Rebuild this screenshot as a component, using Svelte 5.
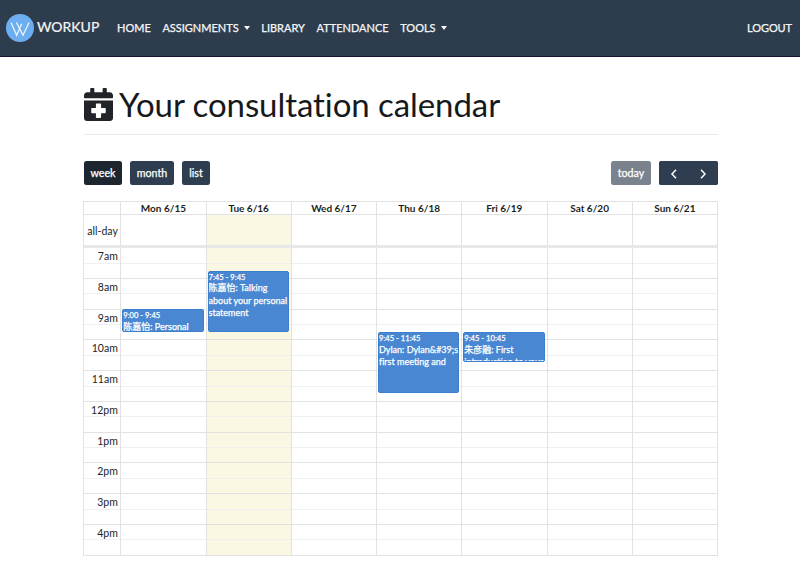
<script>
  const START = 7;
  const HOUR = 30.75;
  const hours = ['7am', '8am', '9am', '10am', '11am', '12pm', '1pm', '2pm', '3pm', '4pm'];
  const days = [
    { label: 'Mon 6/15', events: [{ from: 9, to: 9.75, time: '9:00 - 9:45', title: '陈嘉怡: Personal' }] },
    { label: 'Tue 6/16', today: true, events: [{ from: 7.75, to: 9.75, time: '7:45 - 9:45', title: '陈嘉怡: Talking about your personal statement' }] },
    { label: 'Wed 6/17', events: [] },
    { label: 'Thu 6/18', events: [{ from: 9.75, to: 11.75, time: '9:45 - 11:45', title: 'Dylan: Dylan&#39;s first meeting and' }] },
    { label: 'Fri 6/19', events: [{ from: 9.75, to: 10.75, time: '9:45 - 10:45', title: '朱彦融: First introduction to your' }] },
    { label: 'Sat 6/20', events: [] },
    { label: 'Sun 6/21', events: [] }
  ];
  const views = ['week', 'month', 'list'];
  let view = $state('week');
</script>

<header>
  <a class="brand" href="#home">
    <svg width="28" height="28" viewBox="0 0 28 28">
      <circle cx="14" cy="14" r="14" fill="#6caef0" />
      <path fill="none" stroke="#e9f4ff" stroke-width="1.3" d="M5 8.500 10.700 21.300 15.600 9.800 M10.500 8.500 17 21.300 23 8.500" />
    </svg>
    <span>WORKUP</span>
  </a>
  <nav>
    <a href="#home">HOME</a>
    <a href="#assignments">ASSIGNMENTS<i></i></a>
    <a href="#library">LIBRARY</a>
    <a href="#attendance">ATTENDANCE</a>
    <a href="#tools">TOOLS<i></i></a>
  </nav>
  <a class="logout" href="#logout">LOGOUT</a>
</header>

<main>
  <h1>
    <svg width="29" height="33" viewBox="0 0 448 512" preserveAspectRatio="none">
      <path fill="#212529" d="M0 464c0 26.500 21.500 48 48 48h352c26.500 0 48-21.500 48-48V192H0zM436 160H12c-6.600 0-12-5.400-12-12v-36c0-26.500 21.500-48 48-48h48V12c0-6.600 5.400-12 12-12h40c6.600 0 12 5.400 12 12v52h128V12c0-6.600 5.400-12 12-12h40c6.600 0 12 5.400 12 12v52h48c26.500 0 48 21.500 48 48v36c0 6.600-5.400 12-12 12z" />
      <path fill="#fff" d="M200 240h48c9 0 16 7 16 16v56h56c9 0 16 7 16 16v48c0 9-7 16-16 16h-56v56c0 9-7 16-16 16h-48c-9 0-16-7-16-16v-56h-56c-9 0-16-7-16-16v-48c0-9 7-16 16-16h56v-56c0-9 7-16 16-16z" />
    </svg>
    <span>Your consultation calendar</span>
  </h1>

  <div class="toolbar">
    {#each views as v}
      <button class={v} class:active={view === v} onclick={() => (view = v)}>{v}</button>
    {/each}
    <button class="today-btn" disabled>today</button>
    <div class="arrows">
      <button aria-label="previous"><svg width="8" height="10" viewBox="0 0 8 10"><path d="M6 .8 2 5l4 4.200" /></svg></button>
      <button aria-label="next"><svg width="8" height="10" viewBox="0 0 8 10"><path d="M2 .8l4 4.200-4 4.200" /></svg></button>
    </div>
  </div>

  <section class="calendar">
    <div class="row head">
      <div class="axis"></div>
      {#each days as d}<div class="cell">{d.label}</div>{/each}
    </div>
    <div class="row allday">
      <div class="axis">all-day</div>
      {#each days as d}<div class="cell" class:today={d.today}></div>{/each}
    </div>
    <div class="divider"></div>
    <div class="row body">
      <div class="axis">
        {#each hours as h}<div class="hour"><span>{h}</span></div>{/each}
      </div>
      {#each days as d}
        <div class="cell" class:today={d.today}>
          {#each hours as h}<div class="hour"></div>{/each}
          {#each d.events as e}
            <article style="top: {(e.from - START) * HOUR + 0.7}px; height: {(e.to - e.from) * HOUR - 0.7}px">
              <time>{e.time}</time>
              <p>{e.title}</p>
            </article>
          {/each}
        </div>
      {/each}
    </div>
  </section>
</main>

<style>
  :global(body) {
    background: #fff;
    overflow: hidden;
    font-family: Lato, 'Noto Sans CJK SC', sans-serif;
    font-variant-ligatures: none;
    color: #212529;
  }
  header {
    box-sizing: border-box;
    height: 57px;
    display: flex;
    align-items: center;
    padding: 0 8px 1px 6px;
    background: #2e3d4d;
    border-bottom: 1px solid #12152f;
  }
  a {
    color: #f4f5f6;
    text-decoration: none;
    font-size: 11px;
    line-height: 16px;
    white-space: nowrap;
  }
  .brand {
    display: flex;
    align-items: center;
    gap: 3px;
    width: 111px;
  }
  .brand span {
    font-size: 14px;
    padding-bottom: 2px;
    -webkit-text-stroke: 0.2px #f4f5f6;
  }
  nav {
    display: flex;
    gap: 11.600px;
    flex: 1;
  }
  nav a, .logout {
    padding-top: 1px;
    -webkit-text-stroke: 0.25px #f4f5f6;
  }
  .logout {
    letter-spacing: -0.1px;
  }
  i {
    display: inline-block;
    margin-left: 5px;
    vertical-align: 2px;
    border: 3.500px solid transparent;
    border-width: 4px 3.500px 0;
    border-top-color: #f4f5f6;
  }
  main {
    width: 634px;
    margin-left: 84px;
  }
  h1 {
    box-sizing: border-box;
    height: 78px;
    margin: 0;
    padding-top: 24px;
    display: flex;
    align-items: center;
    gap: 6px;
    border-bottom: 1px solid #e9e9e9;
    font-weight: 400;
    font-size: 33px;
    letter-spacing: -0.07px;
    line-height: 48px;
    color: #16191c;
    white-space: nowrap;
  }
  h1 svg {
    margin-bottom: 6px;
  }
  h1 span {
    padding-bottom: 7px;
  }
  .toolbar {
    display: flex;
    gap: 8px;
    padding: 26px 0 16px;
  }
  button {
    height: 24px;
    padding: 0;
    border: 0;
    border-radius: 2.500px;
    background: #2e3d4f;
    color: #fff;
    font: 400 10.700px/24px Lato, sans-serif;
    -webkit-text-stroke: 0.25px #fff;
  }
  .week { width: 38px; }
  .month { width: 44px; }
  .list { width: 28px; }
  .active {
    background: #1d252f;
  }
  .today-btn {
    width: 40px;
    margin-left: auto;
    background: #7a828d;
  }
  .arrows {
    display: flex;
    width: 59px;
    border-radius: 2.500px;
    background: #2e3d4f;
  }
  .arrows button {
    flex: 1;
    display: flex;
    align-items: center;
    justify-content: center;
    padding-top: 2px;
  }
  .arrows path {
    fill: none;
    stroke: #fff;
    stroke-width: 1.5;
  }
  .calendar {
    box-sizing: border-box;
    width: 635px;
    margin-left: -1px;
    border: 1px solid #e2e2e2;
  }
  .row {
    display: grid;
    grid-template-columns: 36.300px repeat(7, minmax(0, 1fr));
  }
  .cell {
    border-left: 1px solid #e2e2e2;
  }
  .today {
    background: #faf7e3;
  }
  .head {
    height: 12px;
    font-weight: 700;
    font-size: 10px;
    line-height: 13px;
    text-align: center;
    color: #1c1f22;
  }
  .allday {
    height: 30px;
    border-top: 1px solid #e2e2e2;
    font-size: 10.500px;
    line-height: 32px;
  }
  .axis {
    text-align: right;
    padding-right: 2.500px;
  }
  .divider {
    position: relative;
    z-index: 1;
    height: 3px;
    background: #e8e8e8;
  }
  .body {
    margin-top: -1px;
  }
  .body .cell {
    position: relative;
  }
  .hour {
    box-sizing: border-box;
    height: 30.75px;
    border-top: 1px solid #e2e2e2;
    font-size: 10.500px;
    line-height: 17px;
    background: linear-gradient(#f0f0f0, #f0f0f0) 0 14.500px / 100% 1px no-repeat;
  }
  .hour:first-child {
    border-top-color: transparent;
  }
  .axis .hour {
    margin-right: -2.500px;
    padding-right: 2.500px;
  }
  article {
    position: absolute;
    left: 1px;
    right: 2px;
    box-sizing: border-box;
    overflow: hidden;
    padding: 0;
    border: 1px solid #3b7fcd;
    border-radius: 2px;
    background: #4a87d2;
    color: #fff;
  }
  time {
    display: block;
    font-size: 7.600px;
    line-height: 10.500px;
    -webkit-text-stroke: 0.25px #fff;
  }
  p {
    margin: 0;
    font-size: 9px;
    line-height: 12.400px;
    -webkit-text-stroke: 0.25px #fff;
  }
</style>
